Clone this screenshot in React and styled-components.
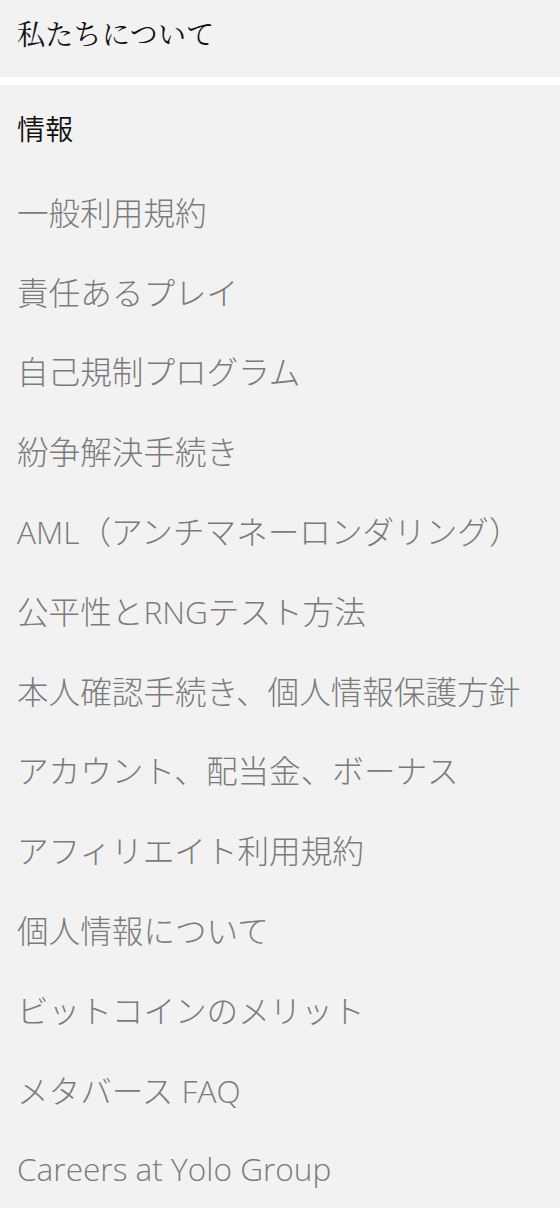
import React from 'react';
import styled, { createGlobalStyle } from 'styled-components';

const GlobalStyle = createGlobalStyle`
  html, body {
    margin: 0;
    padding: 0;
    background-color: #ffffff;
  }
  body {
    font-family: "Open Sans", "Noto Sans CJK JP", sans-serif;
  }
`;

const Page = styled.div`
  width: 560px;
  display: flex;
  flex-direction: column;
  gap: 8px;
  background-color: #ffffff;
`;

const Section = styled.section`
  background-color: #f2f2f2;
  padding: 0 17px ${({ bottom }) => bottom || 0}px;
  display: flex;
  flex-direction: column;
`;

const Heading = styled.div`
  height: ${({ h }) => h}px;
  display: flex;
  align-items: center;
  font-family: ${({ serif }) =>
    serif ? '"Noto Serif CJK JP", "Noto Sans CJK JP", serif' : '"Noto Sans CJK JP", sans-serif'};
  font-size: 28px;
  font-weight: ${({ serif }) => (serif ? 400 : 350)};
  color: #111111;
  letter-spacing: 0.3px;
`;

const Item = styled.a`
  height: 79.8px;
  display: flex;
  align-items: center;
  font-size: 31.6px;
  font-weight: 300;
  color: #7b7b7b;
  text-decoration: none;
  white-space: nowrap;
`;

const links = [
  '一般利用規約',
  '責任あるプレイ',
  '自己規制プログラム',
  '紛争解決手続き',
  'AML（アンチマネーロンダリング）',
  '公平性とRNGテスト方法',
  '本人確認手続き、個人情報保護方針',
  'アカウント、配当金、ボーナス',
  'アフィリエイト利用規約',
  '個人情報について',
  'ビットコインのメリット',
  'メタバース FAQ',
  'Careers at Yolo Group',
];

export default function App() {
  return (
    <>
      <GlobalStyle />
      <Page>
        <Section bottom={11}>
          <Heading h={66} serif>私たちについて</Heading>
        </Section>
        <Section bottom={20}>
          <Heading h={86}>情報</Heading>
          {links.map((l) => (
            <Item key={l} href="#">{l}</Item>
          ))}
        </Section>
      </Page>
    </>
  );
}
